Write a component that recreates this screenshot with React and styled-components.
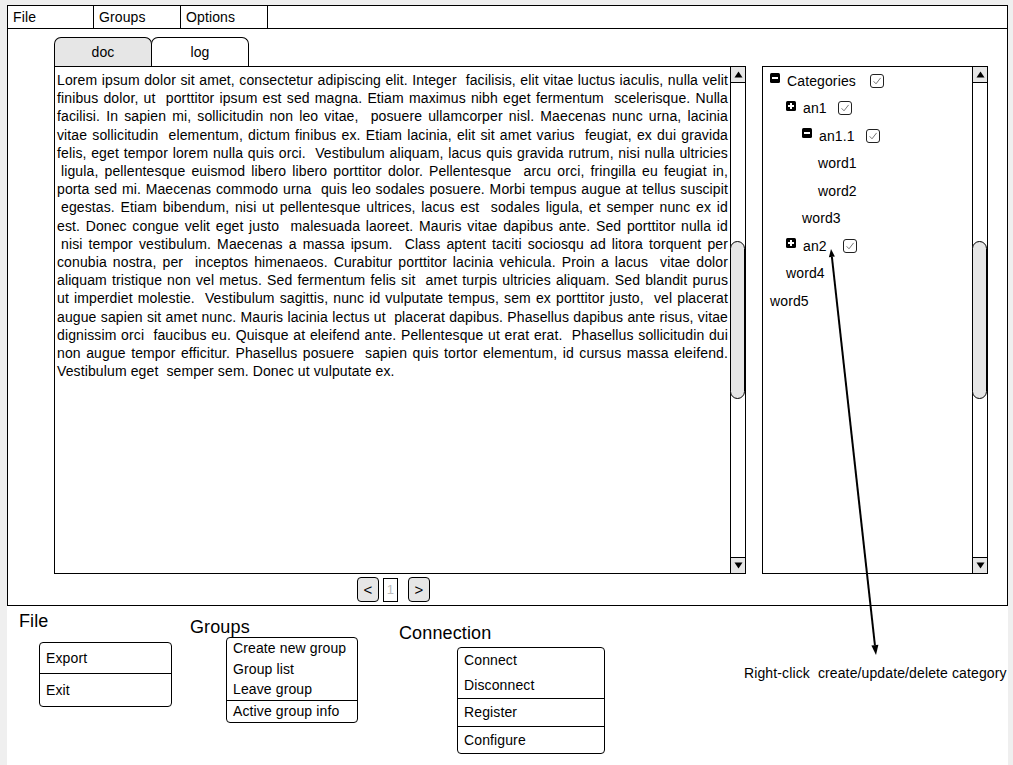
import React from "react";
import styled, { createGlobalStyle } from "styled-components";

const loremLines = [
    "Lorem ipsum dolor sit amet, consectetur adipiscing elit. Integer  facilisis, elit vitae luctus iaculis, nulla velit",
    "finibus dolor, ut  porttitor ipsum est sed magna. Etiam maximus nibh eget fermentum  scelerisque. Nulla",
    "facilisi. In sapien mi, sollicitudin non leo vitae,  posuere ullamcorper nisl. Maecenas nunc urna, lacinia",
    "vitae sollicitudin  elementum, dictum finibus ex. Etiam lacinia, elit sit amet varius  feugiat, ex dui gravida",
    "felis, eget tempor lorem nulla quis orci.  Vestibulum aliquam, lacus quis gravida rutrum, nisi nulla ultricies",
    " ligula, pellentesque euismod libero libero porttitor dolor. Pellentesque  arcu orci, fringilla eu feugiat in,",
    "porta sed mi. Maecenas commodo urna  quis leo sodales posuere. Morbi tempus augue at tellus suscipit",
    " egestas. Etiam bibendum, nisi ut pellentesque ultrices, lacus est  sodales ligula, et semper nunc ex id",
    "est. Donec congue velit eget justo  malesuada laoreet. Mauris vitae dapibus ante. Sed porttitor nulla id",
    " nisi tempor vestibulum. Maecenas a massa ipsum.  Class aptent taciti sociosqu ad litora torquent per",
    "conubia nostra, per  inceptos himenaeos. Curabitur porttitor lacinia vehicula. Proin a lacus  vitae dolor",
    "aliquam tristique non vel metus. Sed fermentum felis sit  amet turpis ultricies aliquam. Sed blandit purus",
    "ut imperdiet molestie.  Vestibulum sagittis, nunc id vulputate tempus, sem ex porttitor justo,  vel placerat",
    "augue sapien sit amet nunc. Mauris lacinia lectus ut  placerat dapibus. Phasellus dapibus ante risus, vitae",
    "dignissim orci  faucibus eu. Quisque at eleifend ante. Pellentesque ut erat erat.  Phasellus sollicitudin dui",
    "non augue tempor efficitur. Phasellus posuere  sapien quis tortor elementum, id cursus massa eleifend.",
    "Vestibulum eget  semper sem. Donec ut vulputate ex.",
];

// level = indent step, toggle = plus/minus box, gap = space before checkbox
const treeRows = [
    { label: "Categories", level: 0, toggle: "minus", gap: 14 },
    { label: "an1", level: 1, toggle: "plus", gap: 11 },
    { label: "an1.1", level: 2, toggle: "minus", gap: 11 },
    { label: "word1", level: 3 },
    { label: "word2", level: 3 },
    { label: "word3", level: 2 },
    { label: "an2", level: 1, toggle: "plus", gap: 16 },
    { label: "word4", level: 1 },
    { label: "word5", level: 0 },
];

const popupMenus = [
    {
        title: "File",
        width: 171,
        top: 5,
        drop: 10,
        indent: 20,
        boxWidth: 133,
        sections: [
            { height: 30, items: ["Export"] },
            { height: 32, items: ["Exit"] },
        ],
    },
    {
        title: "Groups",
        width: 209,
        top: 11,
        drop: -1,
        indent: 36,
        boxWidth: 132,
        sections: [
            { height: 20.67, items: ["Create new group", "Group list", "Leave group"] },
            { height: 21, items: ["Active group info"] },
        ],
    },
    {
        title: "Connection",
        width: 345,
        top: 17,
        drop: 3,
        indent: 58,
        boxWidth: 148,
        sections: [
            { height: 25, items: ["Connect", "Disconnect"] },
            { height: 27, items: ["Register"] },
            { height: 26, items: ["Configure"] },
        ],
    },
];

const Triangle = ({ dir }) => (
    <svg width="9" height="7" viewBox="0 0 9 7">
        <path d={dir === "up" ? "M0.5 6.5 L4.5 0.5 L8.5 6.5Z" : "M0.5 0.5 L4.5 6.5 L8.5 0.5Z"} fill="#000" />
    </svg>
);

const ToggleIcon = ({ open }) => (
    <svg width="10" height="10" viewBox="0 0 10 10">
        <rect width="10" height="10" rx="1.5" fill="#000" />
        <rect x="2" y="4" width="6" height="2" fill="#fff" />
        {!open && <rect x="4" y="2" width="2" height="6" fill="#fff" />}
    </svg>
);

const CheckBox = () => (
    <svg width="14" height="14" viewBox="0 0 14 14">
        <rect x="0.5" y="0.5" width="13" height="13" rx="2.5" fill="#fff" stroke="#222" />
        <path d="M3.6 7.3 L6 9.8 L10.6 3.9" fill="none" stroke="#777" strokeWidth="1" />
    </svg>
);

const ScrollBar = () => (
    <ScrollTrack>
        <ScrollButton $up>
            <Triangle dir="up" />
        </ScrollButton>
        <ScrollThumb />
        <ScrollButton>
            <Triangle dir="down" />
        </ScrollButton>
    </ScrollTrack>
);

const App = () => {
    return (
        <>
            <GlobalStyle />
            <Canvas>
                <Frame>
                    <MenuBar>
                        <MenuCell>File</MenuCell>
                        <MenuCell>Groups</MenuCell>
                        <MenuCell>Options</MenuCell>
                    </MenuBar>
                    <Workspace>
                        <DocColumn>
                            <TabRow>
                                <Tab $active>doc</Tab>
                                <Tab>log</Tab>
                            </TabRow>
                            <TextPanel>
                                <TextBody>
                                    {loremLines.map((line, i) => (
                                        <TextLine
                                            key={i}
                                            $indent={line.startsWith(" ")}
                                            $last={i === loremLines.length - 1}
                                        >
                                            {line.trim().replace(/  /g, "\u00a0 ")}
                                        </TextLine>
                                    ))}
                                </TextBody>
                                <ScrollBar />
                            </TextPanel>
                            <Pager>
                                <PagerButton>&lt;</PagerButton>
                                <PageBox>1</PageBox>
                                <PagerButton>&gt;</PagerButton>
                            </Pager>
                        </DocColumn>
                        <TreePanel>
                            <TreeBody>
                                {treeRows.map((row) => (
                                    <TreeRow key={row.label} $level={row.level}>
                                        {row.toggle && (
                                            <ToggleBox>
                                                <ToggleIcon open={row.toggle === "minus"} />
                                            </ToggleBox>
                                        )}
                                        <span>{row.label}</span>
                                        {row.toggle && (
                                            <CheckHolder $gap={row.gap}>
                                                <CheckBox />
                                            </CheckHolder>
                                        )}
                                    </TreeRow>
                                ))}
                            </TreeBody>
                            <ScrollBar />
                        </TreePanel>
                    </Workspace>
                </Frame>

                <BottomArea>
                    {popupMenus.map((menu) => (
                        <MenuGroup key={menu.title} $width={menu.width} $top={menu.top}>
                            <GroupTitle>{menu.title}</GroupTitle>
                            <PopupBox $indent={menu.indent} $drop={menu.drop} $width={menu.boxWidth}>
                                {menu.sections.map((section, i) => (
                                    <PopupSection key={i}>
                                        {section.items.map((item) => (
                                            <PopupItem key={item} $height={section.height}>
                                                {item}
                                            </PopupItem>
                                        ))}
                                    </PopupSection>
                                ))}
                            </PopupBox>
                        </MenuGroup>
                    ))}
                    <Annotation>Right-click&nbsp; create/update/delete category</Annotation>
                </BottomArea>

                {/* annotation arrow: an2 -> note */}
                <ArrowOverlay width="1001" height="760" viewBox="0 0 1001 760">
                    <line x1="824.9" y1="252" x2="867.9" y2="640" stroke="#000" strokeWidth="2" />
                    <path d="M824 244 L827.9 251.6 L821.9 252.3Z" fill="#000" />
                    <path d="M869 650 L871.4 639.7 L864.4 640.4Z" fill="#000" />
                </ArrowOverlay>
            </Canvas>
        </>
    );
};

export default App;

const GlobalStyle = createGlobalStyle`
    html, body {
        margin: 0;
        padding: 0;
        background: #efefef;
    }
    body {
        font-family: "Liberation Sans", Arial, sans-serif;
        color: #000;
        letter-spacing: 0.12px;
    }
    * {
        box-sizing: border-box;
    }
`;

const Canvas = styled.div`
    position: relative;
    margin: 5px 0 0 7px;
    width: 1001px;
    height: 760px;
    background: #fff;
`;

const Frame = styled.div`
    display: flex;
    flex-direction: column;
    height: 601px;
    border: 1px solid #000;
`;

const MenuBar = styled.div`
    display: flex;
    height: 23px;
    border-bottom: 1px solid #000;
`;

const MenuCell = styled.div`
    width: 87px;
    padding-left: 5px;
    border-right: 1px solid #000;
    font-size: 14px;
    line-height: 23px;
    &:first-child {
        width: 86px;
    }
`;

const Workspace = styled.div`
    display: flex;
    align-items: flex-start;
    padding: 8px 0 0 46px;
`;

const DocColumn = styled.div`
    display: flex;
    flex-direction: column;
    width: 692px;
`;

const TabRow = styled.div`
    display: flex;
    height: 29px;
`;

const Tab = styled.div`
    width: 98px;
    height: 29px;
    border: 1px solid #000;
    border-bottom: none;
    border-radius: 7px 7px 0 0;
    background: ${(p) => (p.$active ? "#e6e6e6" : "#fff")};
    font-size: 14px;
    line-height: 29px;
    text-align: center;
    & + & {
        margin-left: -1px;
    }
`;

const TextPanel = styled.div`
    display: flex;
    height: 508px;
    border: 1px solid #000;
`;

const TextBody = styled.div`
    flex: 1;
    min-width: 0;
    padding: 4px 2px 0 2px;
    font-size: 14px;
    line-height: 18.2px;
    overflow: hidden;
`;

const TextLine = styled.div`
    white-space: nowrap;
    text-align: justify;
    text-align-last: ${(p) => (p.$last ? "left" : "justify")};
    padding-left: ${(p) => (p.$indent ? "4px" : "0")};
`;

const ScrollTrack = styled.div`
    display: flex;
    flex-direction: column;
    width: 15px;
    flex-shrink: 0;
    border-left: 1px solid #000;
`;

const ScrollButton = styled.div`
    display: flex;
    align-items: center;
    justify-content: center;
    height: 16px;
    background: #e6e6e6;
    border-bottom: ${(p) => (p.$up ? "1px solid #000" : "none")};
    border-top: ${(p) => (p.$up ? "none" : "1px solid #000")};
    margin-top: ${(p) => (p.$up ? "0" : "auto")};
`;

const ScrollThumb = styled.div`
    margin: 158px 0 0 -1px;
    width: 15px;
    height: 158px;
    border: 1px solid #000;
    border-radius: 8px;
    background: #e6e6e6;
`;

const Pager = styled.div`
    display: flex;
    align-items: center;
    margin: 3px 0 0 303px;
`;

const PagerButton = styled.div`
    width: 22px;
    height: 25px;
    border: 1px solid #000;
    border-radius: 4px;
    background: #e6e6e6;
    font-size: 15px;
    line-height: 23px;
    text-align: center;
`;

const PageBox = styled.div`
    width: 15px;
    height: 24px;
    margin: 0 10px 0 4px;
    border: 1px solid #000;
    color: #bbb;
    font-size: 13px;
    line-height: 22px;
    text-align: center;
`;

const TreePanel = styled.div`
    display: flex;
    width: 226px;
    height: 508px;
    margin: 29px 0 0 16px;
    border: 1px solid #000;
`;

const TreeBody = styled.div`
    flex: 1;
    padding-left: 7px;
`;

const TreeRow = styled.div`
    display: flex;
    align-items: center;
    height: 27.5px;
    padding-left: ${(p) => p.$level * 16}px;
    font-size: 14px;
`;

const ToggleBox = styled.span`
    display: flex;
    margin: 0 7px 5px 0;
`;

const CheckHolder = styled.span`
    display: flex;
    margin-left: ${(p) => p.$gap}px;
`;

const BottomArea = styled.div`
    display: flex;
    align-items: flex-start;
    padding-left: 12px;
`;

const MenuGroup = styled.div`
    flex-shrink: 0;
    width: ${(p) => p.$width}px;
    padding-top: ${(p) => p.$top}px;
`;

const GroupTitle = styled.div`
    font-size: 18px;
    line-height: 21px;
`;

const PopupBox = styled.div`
    width: ${(p) => p.$width}px;
    margin: ${(p) => p.$drop}px 0 0 ${(p) => p.$indent}px;
    border: 1px solid #000;
    border-radius: 4px;
    background: #fff;
`;

const PopupSection = styled.div`
    & + & {
        border-top: 1px solid #000;
    }
`;

const PopupItem = styled.div`
    padding-left: 6px;
    font-size: 14px;
    line-height: ${(p) => p.$height}px;
`;

const Annotation = styled.div`
    padding-top: 59px;
    font-size: 14px;
    white-space: nowrap;
`;

const ArrowOverlay = styled.svg`
    position: absolute;
    left: 0;
    top: 0;
    pointer-events: none;
`;
